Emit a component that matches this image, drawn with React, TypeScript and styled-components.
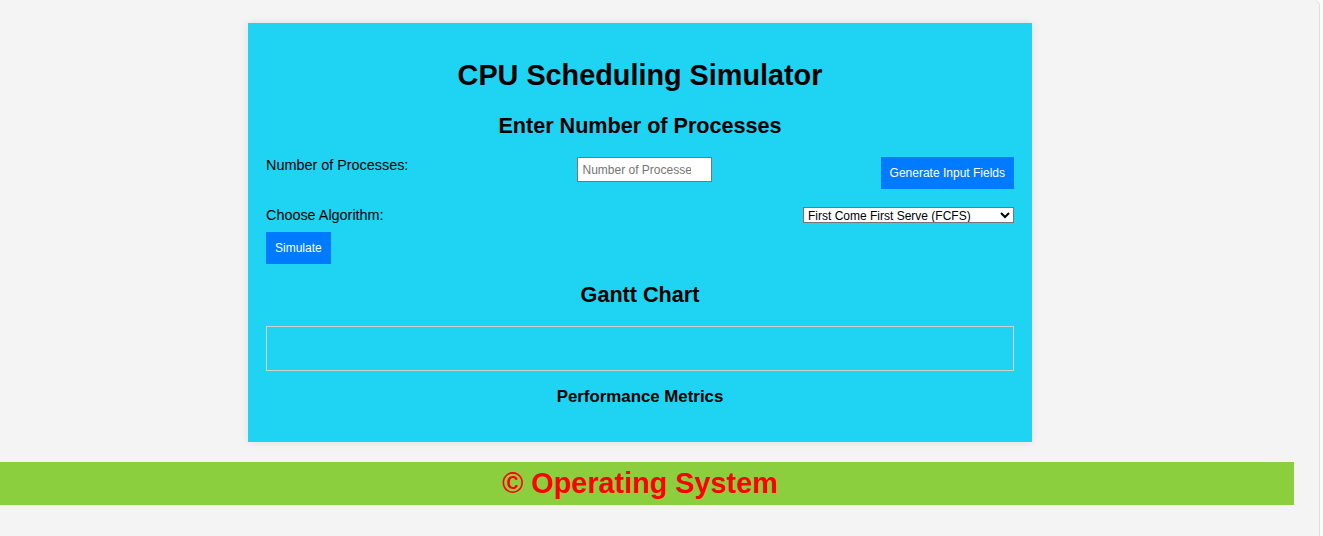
import styled, { createGlobalStyle } from "styled-components";

const GlobalStyle = createGlobalStyle`
html, body {
    margin: 0;
    background: #fbfbfb;
}
body {
    font-family: "Liberation Sans", Arial, sans-serif;
    color: #000;
}
* {
    box-sizing: border-box;
}
`;

const Frame = styled.div`
width: 1320px;
min-height: 536px;
background: #f4f4f4;
border-right: 1px solid #dedede;
border-top-right-radius: 6px;
overflow: hidden;
`;

const Main = styled.main`
width: 1280px;
`;

const Card = styled.section`
width: 784px;
margin: 23px auto 0;
padding: 18px 18px 18px;
background: #1fd3f3;
box-shadow: 0 0 9px rgba(0, 0, 0, 0.09);
`;

const Title = styled.h1`
margin: 18px 0 0;
font-size: 28.8px;
line-height: 33px;
text-align: center;
`;

const Heading = styled.h2<{ $top: number }>`
margin: ${(p) => p.$top}px 0 0;
font-size: 21.6px;
line-height: 25px;
text-align: center;
`;

const SubHeading = styled.h3`
margin: 15.9px 0 17px;
font-size: 16.85px;
line-height: 20px;
text-align: center;
`;

const Row = styled.div<{ $top: number }>`
display: flex;
justify-content: space-between;
align-items: flex-start;
margin-top: ${(p) => p.$top}px;
`;

const Label = styled.label`
font-size: 14.4px;
line-height: 17px;
`;

const NumberInput = styled.input`
width: 135px;
height: 25px;
padding: 0 4.5px;
font-family: "Liberation Sans", Arial, sans-serif;
font-size: 12px;
border: 1px solid #767676;
border-radius: 0;
background: #fff;

&::placeholder {
    color: #757575;
}
`;

const Button = styled.button`
display: block;
padding: 9px;
border: none;
border-radius: 0;
background: #007bff;
color: #fff;
font-family: "Liberation Sans", Arial, sans-serif;
font-size: 12px;
line-height: 14px;
cursor: pointer;
`;

const SimulateButton = styled(Button)`
margin-top: 8px;
`;

const Select = styled.select`
width: 211px;
height: 16px;
padding: 0;
font-family: "Liberation Sans", Arial, sans-serif;
font-size: 12px;
border: 1px solid #767676;
border-radius: 0;
background: #fff;
color: #000;
`;

const GanttBox = styled.div`
height: 45px;
margin-top: 18.8px;
border: 1px solid #cfcfcf;
`;

const Footer = styled.footer`
width: 1294px;
margin-top: 20px;
padding: 5.5px 14px 5.5px 0;
background: #8bce3e;
color: #ff0000;
font-size: 28.8px;
font-weight: bold;
line-height: 32px;
text-align: center;
`;

export default function App() {
    return (
        <>
            <GlobalStyle />
            <Frame>
                <Main>
                    <Card>
                        <Title>CPU Scheduling Simulator</Title>
                        <Heading $top={20.5}>Enter Number of Processes</Heading>
                        <Row $top={19.5}>
                            <Label htmlFor="count">Number of Processes:</Label>
                            <NumberInput id="count" type="number" placeholder="Number of Processes" />
                            <Button>Generate Input Fields</Button>
                        </Row>
                        <Row $top={18}>
                            <Label htmlFor="algo">Choose Algorithm:</Label>
                            <Select id="algo" defaultValue="fcfs">
                                <option value="fcfs">First Come First Serve (FCFS)</option>
                                <option value="sjf">Shortest Job First (SJF)</option>
                                <option value="rr">Round Robin (RR)</option>
                                <option value="priority">Priority Scheduling</option>
                            </Select>
                        </Row>
                        <SimulateButton>Simulate</SimulateButton>
                        <Heading $top={18.2}>Gantt Chart</Heading>
                        <GanttBox />
                        <SubHeading>Performance Metrics</SubHeading>
                    </Card>
                </Main>
                <Footer>© Operating System</Footer>
            </Frame>
        </>
    );
}
